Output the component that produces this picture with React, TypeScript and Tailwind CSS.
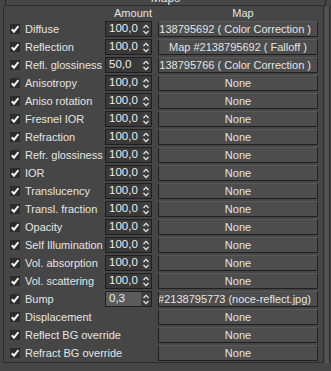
import React from "react";

type Row = { label: string; amount?: string; map: string; long?: boolean; light?: boolean };

const rows: Row[] = [
  { label: "Diffuse", amount: "100,0", map: "Map #2138795692 ( Color Correction )", long: true },
  { label: "Reflection", amount: "100,0", map: "Map #2138795692 ( Falloff )" },
  { label: "Refl. glossiness", amount: "50,0", map: "Map #2138795766 ( Color Correction )", long: true },
  { label: "Anisotropy", amount: "100,0", map: "None" },
  { label: "Aniso rotation", amount: "100,0", map: "None" },
  { label: "Fresnel IOR", amount: "100,0", map: "None" },
  { label: "Refraction", amount: "100,0", map: "None" },
  { label: "Refr. glossiness", amount: "100,0", map: "None" },
  { label: "IOR", amount: "100,0", map: "None" },
  { label: "Translucency", amount: "100,0", map: "None" },
  { label: "Transl. fraction", amount: "100,0", map: "None" },
  { label: "Opacity", amount: "100,0", map: "None" },
  { label: "Self Illumination", amount: "100,0", map: "None" },
  { label: "Vol. absorption", amount: "100,0", map: "None" },
  { label: "Vol. scattering", amount: "100,0", map: "None" },
  { label: "Bump", amount: "0,3", map: "Map #2138795773 (noce-reflect.jpg)", long: true, light: true },
  { label: "Displacement", map: "None" },
  { label: "Reflect BG override", map: "None" },
  { label: "Refract BG override", map: "None" },
];

function Check() {
  return (
    <svg width="10" height="10" viewBox="0 0 10 10" className="shrink-0">
      <rect x="0" y="0" width="10" height="10" fill="#2b2b2b" />
      <path d="M1.8 5.2 L4 7.6 L8.4 2.2" fill="none" stroke="#f4f4f4" strokeWidth="2" />
    </svg>
  );
}

function Spinner({ value, light }: { value: string; light?: boolean }) {
  return (
    <div className="flex h-[16px] w-[47px] shrink-0 border border-[#1f1f1f]">
      <div
        className={
          "flex w-[35px] items-center overflow-hidden pl-[3px] text-[11.5px] text-[#ececec] " +
          (light ? "bg-[#5c5c5c]" : "bg-[#393939]")
        }
      >
        {value}
      </div>
      <div className="flex w-[10px] items-center justify-center bg-[#3e3e3e]">
        <svg width="6" height="11" viewBox="0 0 6 11">
          <path d="M0.5 4 L3 1.3 L5.5 4" fill="none" stroke="#e8e8e8" strokeWidth="1.2" />
          <path d="M0.5 7 L3 9.7 L5.5 7" fill="none" stroke="#e8e8e8" strokeWidth="1.2" />
        </svg>
      </div>
    </div>
  );
}

export default function App() {
  return (
    <div className="flex h-[371px] w-[331px] flex-col overflow-hidden bg-[#464646] font-['Liberation_Sans',sans-serif] text-[11px] text-[#e4e4e4]">
      {/* rollout title, mostly scrolled off */}
      <div className="mx-[5px] mt-[-9px] flex h-[15px] shrink-0 items-center justify-center border border-[#2a2a2a] border-t-0 bg-[#474747] text-[12px]">
        Maps
      </div>

      <div className="flex">
        <div className="ml-[3px] flex w-[321px] flex-col border-x border-b border-[#2c2c2c]">
          <div className="flex h-[14px] items-center leading-none">
            <span className="ml-[106px] w-[46px] text-center">Amount</span>
            <span className="ml-[7px] w-[160px] text-center">Map</span>
          </div>

          {rows.map((r) => (
            <div key={r.label} className="flex h-[18px] items-center">
              <div className="ml-[6px]">
                <Check />
              </div>
              <span className="ml-[5px] w-[80px] whitespace-nowrap leading-none">{r.label}</span>
              {r.amount ? <Spinner value={r.amount} light={r.light} /> : <div className="w-[47px]" />}
              <div
                className={
                  "ml-[6px] flex h-[16px] w-[160px] items-center overflow-hidden whitespace-nowrap border border-[#202020] border-t-[#5a5a5a] bg-[#4d4d4d] " +
                  (r.long ? "justify-end pr-[6px]" : "justify-center")
                }
              >
                <span className="shrink-0">{r.map}</span>
              </div>
            </div>
          ))}
        </div>
        <div className="ml-[1px] w-[4px] bg-[#525252]" />
        <div className="w-[1px] bg-[#2a2a2a]" />
      </div>
    </div>
  );
}
